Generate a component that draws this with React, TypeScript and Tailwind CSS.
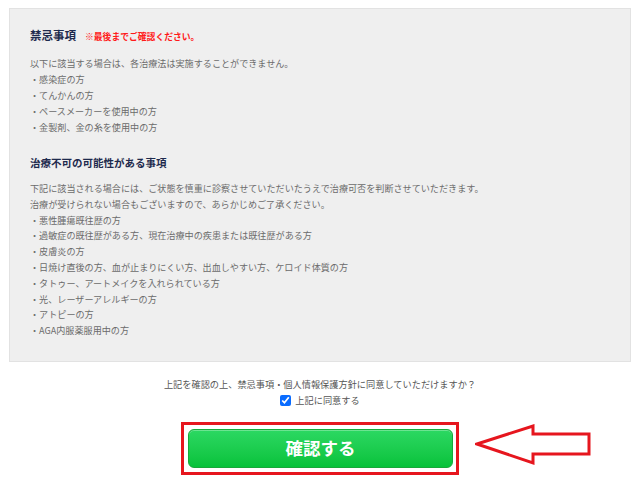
const contraindications = [
  "・感染症の方",
  "・てんかんの方",
  "・ペースメーカーを使用中の方",
  "・金製剤、金の糸を使用中の方",
];

const possibleIssues = [
  "・悪性腫瘍既往歴の方",
  "・過敏症の既往歴がある方、現在治療中の疾患または既往歴がある方",
  "・皮膚炎の方",
  "・日焼け直後の方、血が止まりにくい方、出血しやすい方、ケロイド体質の方",
  "・タトゥー、アートメイクを入れられている方",
  "・光、レーザーアレルギーの方",
  "・アトピーの方",
  "・AGA内服薬服用中の方",
];

const App = () => {
  return (
    <div
      className="w-[640px] h-[483px] bg-white overflow-hidden relative"
      style={{ fontFamily: '"Noto Sans CJK JP", "Noto Sans", sans-serif' }}
    >
      <div className="pt-[8px] px-[9px]">
        {/* Notice box */}
        <div className="h-[354px] bg-[#efefef] border border-[#e2e2e2] pl-[20px] pt-[18px]">
          <div className="flex items-baseline gap-[9px]">
            <h3 className="text-[11.5px] leading-[16px] font-bold text-[#1e2a4d]">禁忌事項</h3>
            <span className="text-[8.8px] leading-[16px] font-bold text-[#ff1a1a]">
              ※最後までご確認ください。
            </span>
          </div>

          <div className="mt-[10px] text-[9.1px] leading-[16px] text-[#6b6b6b]">
            <p>以下に該当する場合は、各治療法は実施することができません。</p>
            {contraindications.map((item) => (
              <p key={item}>{item}</p>
            ))}
          </div>

          <h3 className="mt-[20px] text-[10.5px] leading-[16px] font-bold text-[#1e2a4d]">
            治療不可の可能性がある事項
          </h3>

          <div className="mt-[10px] text-[9.1px] leading-[15.8px] text-[#6b6b6b]">
            <p>下記に該当される場合には、ご状態を慎重に診察させていただいたうえで治療可否を判断させていただきます。</p>
            <p>治療が受けられない場合もございますので、あらかじめご了承ください。</p>
            {possibleIssues.map((item) => (
              <p key={item}>{item}</p>
            ))}
          </div>
        </div>
      </div>

      {/* Agreement */}
      <div className="flex flex-col items-center mt-[14px] text-[9.2px] text-[#555]">
        <p className="leading-[16px]">
          上記を確認の上、禁忌事項・個人情報保護方針に同意していただけますか？
        </p>
        <label className="flex items-center gap-[4px] leading-[16px]">
          <input type="checkbox" defaultChecked className="w-[11px] h-[11px] m-0 accent-[#0a6cff]" />
          上記に同意する
        </label>
      </div>

      {/* Confirm button */}
      <div className="flex justify-center mt-[14px]">
        <div className="border-[3px] border-[#e6161e] pt-[4px] pb-[4px] pl-[4px] pr-[3px]">
          <button className="w-[265px] h-[39px] rounded-[6px] border border-[#17a83a] bg-gradient-to-b from-[#2bd862] to-[#05c23a] text-white text-[17.5px] font-bold shadow-[inset_0_1px_0_rgba(255,255,255,0.3)]">
            確認する
          </button>
        </div>
      </div>

      {/* Annotation arrow */}
      <svg
        className="absolute left-[475px] top-[424px]"
        width="117"
        height="42"
        viewBox="0 0 117 42"
        fill="white"
        stroke="#e6161e"
        strokeWidth="3"
      >
        <polygon points="2,20 58,2 58,10 114,10 114,30 58,30 58,39" />
      </svg>
    </div>
  );
};

export default App;
